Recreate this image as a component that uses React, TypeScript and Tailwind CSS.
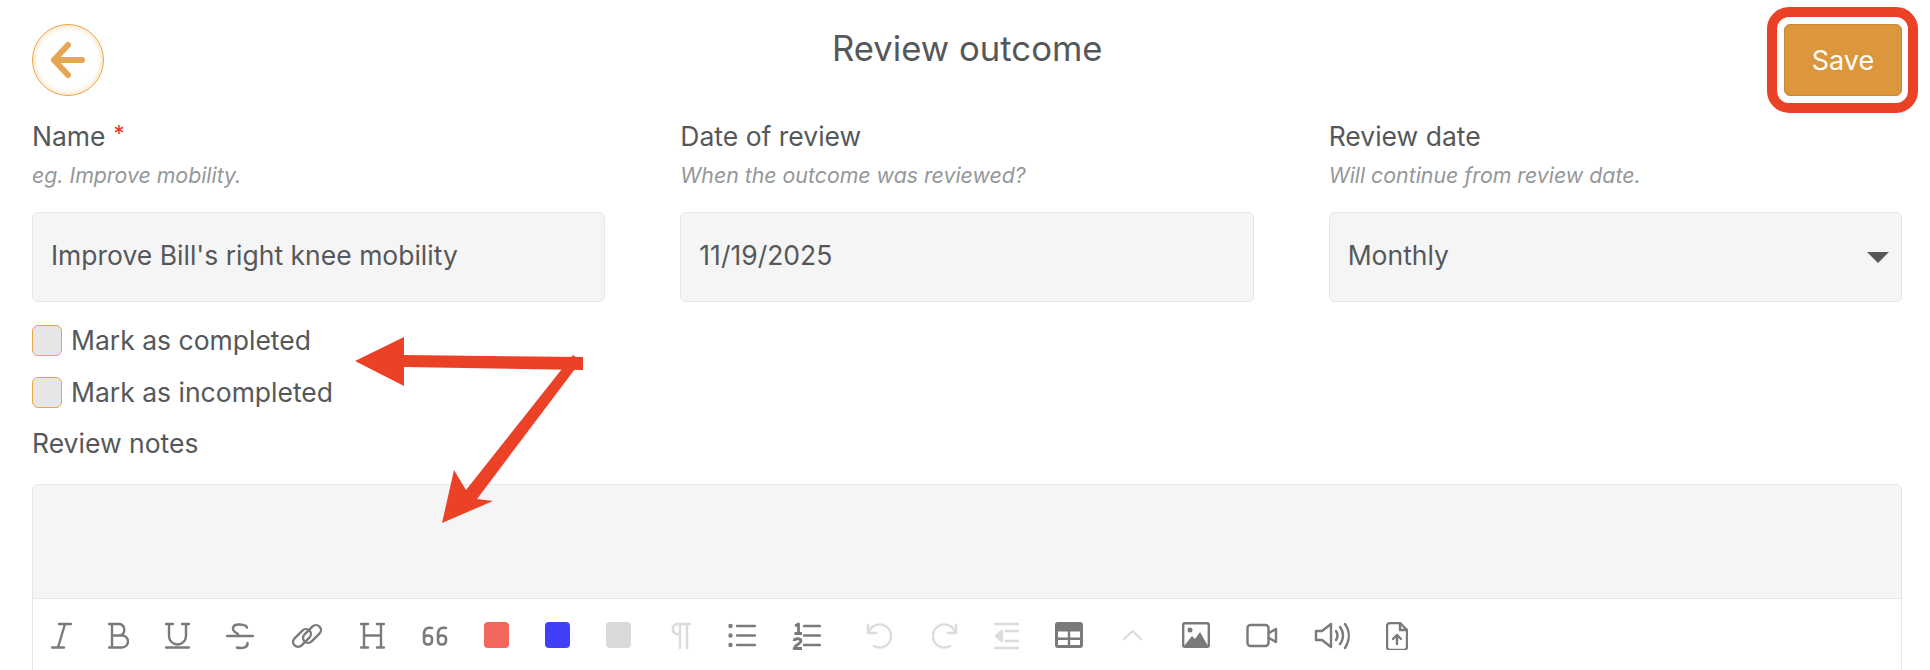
const ink = "#7a7a7a";
const faded = "#dcdcdc";

type IconProps = { w: number; color?: string; children: React.ReactNode };

function Glyph({ w, color = ink, children }: IconProps) {
  return (
    <svg width={w} height={28} viewBox={`0 0 ${w} 28`} fill="none" stroke={color} strokeWidth={2.4} strokeLinecap="round" strokeLinejoin="round" className="shrink-0">
      {children}
    </svg>
  );
}

function Swatch({ color }: { color: string }) {
  return <div className={`h-[26px] w-[25px] shrink-0 rounded-[4px] ${color}`} />;
}

function Toolbar() {
  return (
    <div className="flex h-[71px] items-start gap-9 pl-[18px] pt-[23px]">
      <Glyph w={21}>
        <path d="M8 2h12M1 25.500h12M14 2 7 25.500" />
      </Glyph>
      <Glyph w={21}>
        <path d="M1 2h11a6 6 0 0 1 0 11.500H4M4 13.500h10a6 6 0 0 1 0 12H1M4 2v23.500" />
      </Glyph>
      <Glyph w={25}>
        <path d="M1 2h7M17 2h7M4 2v12a8.500 8.500 0 0 0 17 0V2M1 25.500h23" />
      </Glyph>
      <Glyph w={28}>
        <path d="M21 5.500C20 2.500 8 0.500 7 6c-.5 3 3 5 5 6M1 14h26M11 25.500c6 1.500 11-.5 10.500-4.500" />
      </Glyph>
      <Glyph w={34}>
        <rect x={1.500} y={11} width={21} height={10} rx={5} transform="rotate(-45 12 16)" />
        <rect x={11.500} y={7} width={21} height={10} rx={5} transform="rotate(-45 22 12)" />
      </Glyph>
      <Glyph w={25}>
        <path d="M1 2h7M17 2h7M1 25.500h7M17 25.500h7M4 2v23.500M21 2v23.500M4 13.500h17" />
      </Glyph>
      <Glyph w={27}>
        <path d="M11 6c-5-1-8 1-8 6v6c0 3 1.500 4.500 4 4.500s4-1.500 4-4.500v-1c0-2.500-1.500-3.500-4-3.500s-4 1-4 3" strokeWidth={2.600} />
        <path d="M25 6c-5-1-8 1-8 6v6c0 3 1.500 4.500 4 4.500s4-1.500 4-4.500v-1c0-2.500-1.500-3.500-4-3.500s-4 1-4 3" strokeWidth={2.600} />
      </Glyph>
      <Swatch color="bg-[#f2665c]" />
      <Swatch color="bg-[#4040f8]" />
      <Swatch color="bg-[#d9d9d9]" />
      <Glyph w={24} color={faded}>
        <path d="M12 12H9A5.500 5.500 0 0 1 9 2h14M13 2v24M20 2v24" />
      </Glyph>
      <div className="ml-px">
        <Glyph w={28}>
          <circle cx={2.500} cy={4} r={1} />
          <circle cx={2.500} cy={13.500} r={1} />
          <circle cx={2.500} cy={23} r={1} />
          <path d="M9 4h18M9 13.500h18M9 23h18" />
        </Glyph>
      </div>
      <Glyph w={29}>
        <path d="M3 4l3.500-2v9M2.500 11.500h7.500" strokeWidth={2.800} strokeLinecap="butt" />
        <path d="M2 19c.5-3 7-3 7 0 0 2.500-6 3.500-7 7.500h8" strokeWidth={2.800} strokeLinecap="butt" />
        <path d="M12 4h16M12 13.500h16M12 23h16" />
      </Glyph>
      <div className="ml-[9px]">
        <Glyph w={26} color={faded}>
          <path d="M2 3v8h8" />
          <path d="M2.500 11A11.500 11.500 0 1 1 8 24" />
        </Glyph>
      </div>
      <div className="ml-1">
        <Glyph w={26} color={faded}>
          <path d="M24 3v8h-8" />
          <path d="M23.500 11A11.500 11.500 0 1 0 18 24" />
        </Glyph>
      </div>
      <Glyph w={25} color={faded}>
        <path d="M1 2h24M12 9h13M12 19h13M1 26h24" />
        <path d="M8 9v10l-6-5z" fill={faded} />
      </Glyph>
      <svg width={28} height={26} viewBox="0 0 28 26" className="shrink-0">
        <path fillRule="evenodd" fill={ink} d="M3 0h22a3 3 0 0 1 3 3v20a3 3 0 0 1-3 3H3a3 3 0 0 1-3-3V3a3 3 0 0 1 3-3ZM3 9.500v6h9.800v-6Zm12.200 0v6H25v-6ZM3 18v5h9.800v-5Zm12.200 0v5H25v-5Z" />
      </svg>
      <div className="ml-[3px]">
        <Glyph w={21} color={faded}>
          <path d="M2 17 10.500 9 19 17" />
        </Glyph>
      </div>
      <div className="ml-[3px]">
        <svg width={28} height={26} viewBox="0 0 28 26" className="shrink-0">
          <rect x={1.200} y={1.200} width={25.600} height={23.600} rx={1.500} fill="none" stroke={ink} strokeWidth={2.400} />
          <circle cx={8} cy={8} r={2.500} fill={ink} />
          <path d="M2 24 10 14l3 3 5-7 8 14Z" fill={ink} />
        </svg>
      </div>
      <Glyph w={32}>
        <rect x={1.500} y={3} width={21} height={21} rx={3} />
        <path d="M23 11l7-4v13l-7-4" />
      </Glyph>
      <Glyph w={36}>
        <path d="M2 9v9h6l9 7V2L8 9Z" />
        <path d="M22 9c2 3 2 6 0 9M26 5c4 5 4 12 0 17M31 2c5 7 5 16 0 24" />
      </Glyph>
      <Glyph w={22}>
        <path d="M14 1H4a3 3 0 0 0-3 3v21a3 3 0 0 0 3 3h14a3 3 0 0 0 3-3V8Z" />
        <path d="M14 1v7h7" />
        <path d="M11 22v-9M7 17l4-4 4 4" />
      </Glyph>
    </div>
  );
}

function Field({ label, hint, value, required, select }: { label: string; hint: string; value: string; required?: boolean; select?: boolean }) {
  return (
    <div className="flex flex-col">
      <div className="flex h-[28px] translate-y-px items-center text-[26.500px] leading-none text-[#55585a]">
        {label}
        {required && <span className="relative -top-[3px] ml-[8px] text-[22px] text-[#ee3124]">*</span>}
      </div>
      <div className="mt-[15px] h-[22px] text-[21.300px] italic leading-[22px] text-[#94989a]">{hint}</div>
      <div className="mt-[26px] flex h-[90px] items-center justify-between rounded-[6px] border border-[#e6e6e6] bg-[#f5f5f5] pb-[3px] pl-[18px] pr-[12px] text-[26.500px] text-[#55585a]">
        <span>{value}</span>
        {select && <div className="mt-[3px] h-0 w-0 border-x-[11px] border-t-[11px] border-x-transparent border-t-[#55585a]" />}
      </div>
    </div>
  );
}

function Check({ label }: { label: string }) {
  return (
    <label className="flex h-[31px] items-center gap-[9px] text-[26.500px] text-[#55585a]">
      <span className="h-[31px] w-[30px] rounded-[6px] border border-[#eda342] bg-[#e6e6e6]" />
      {label}
    </label>
  );
}

export default function App() {
  return (
    <div className="relative h-[670px] w-[1930px] overflow-hidden bg-white pl-[32px] pr-[28px] font-['Inter',sans-serif]">
      <div className="relative flex h-[96px] items-start justify-between pt-[24px]">
        <button className="flex h-[72px] w-[72px] items-center justify-center rounded-full border border-[#eda342] shadow-[inset_0_0_6px_rgba(237,163,66,0.45)]" type="button">
          <svg width={34} height={40} viewBox="0 0 34 40" fill="none" stroke="#e5a754" strokeWidth={6} strokeLinecap="round" strokeLinejoin="round">
            <path d="M3 20h28M17 5 3 20l14 15" />
          </svg>
        </button>
        <h1 className="absolute left-[800px] top-[31px] whitespace-nowrap text-[34.700px] font-normal leading-none text-[#55585a]">Review outcome</h1>
        <button className="h-[72px] w-[118px] rounded-[6px] border border-[#c98a35] bg-[#dc963c] pt-[2px] text-[27px] text-white" type="button">
          Save
        </button>
      </div>

      <div className="mt-[25px] grid grid-cols-3 gap-x-[75px]">
        <Field label="Name" required hint="eg. Improve mobility." value="Improve Bill's right knee mobility" />
        <Field label="Date of review" hint="When the outcome was reviewed?" value="11/19/2025" />
        <Field label="Review date" hint="Will continue from review date." value="Monthly" select />
      </div>

      <div className="mt-[23px] flex flex-col gap-[21px]">
        <Check label="Mark as completed" />
        <Check label="Mark as incompleted" />
      </div>

      <div className="mt-[21px] h-[28px] text-[26.500px] leading-[28px] text-[#55585a]">Review notes</div>

      <div className="mt-[27px] overflow-hidden rounded-t-[6px] border border-[#e6e6e6]">
        <div className="h-[114px] border-b border-[#e6e6e6] bg-[#f5f5f5]" />
        <Toolbar />
      </div>

      {/* screenshot annotation: red box and arrows */}
      <div className="pointer-events-none absolute left-[1767px] top-[7px] h-[106px] w-[151px] rounded-[22px] border-[10px] border-[#eb4127]" />
      <svg className="pointer-events-none absolute left-0 top-0" width={1930} height={670} viewBox="0 0 1930 670">
        <path d="M583 357v13l-179-3v19l-49-25 49-24v18Z" fill="#eb4127" />
        <path d="M573 355 581 361 477 499 493 501 442 523 454 470 466 490Z" fill="#eb4127" />
      </svg>
    </div>
  );
}
